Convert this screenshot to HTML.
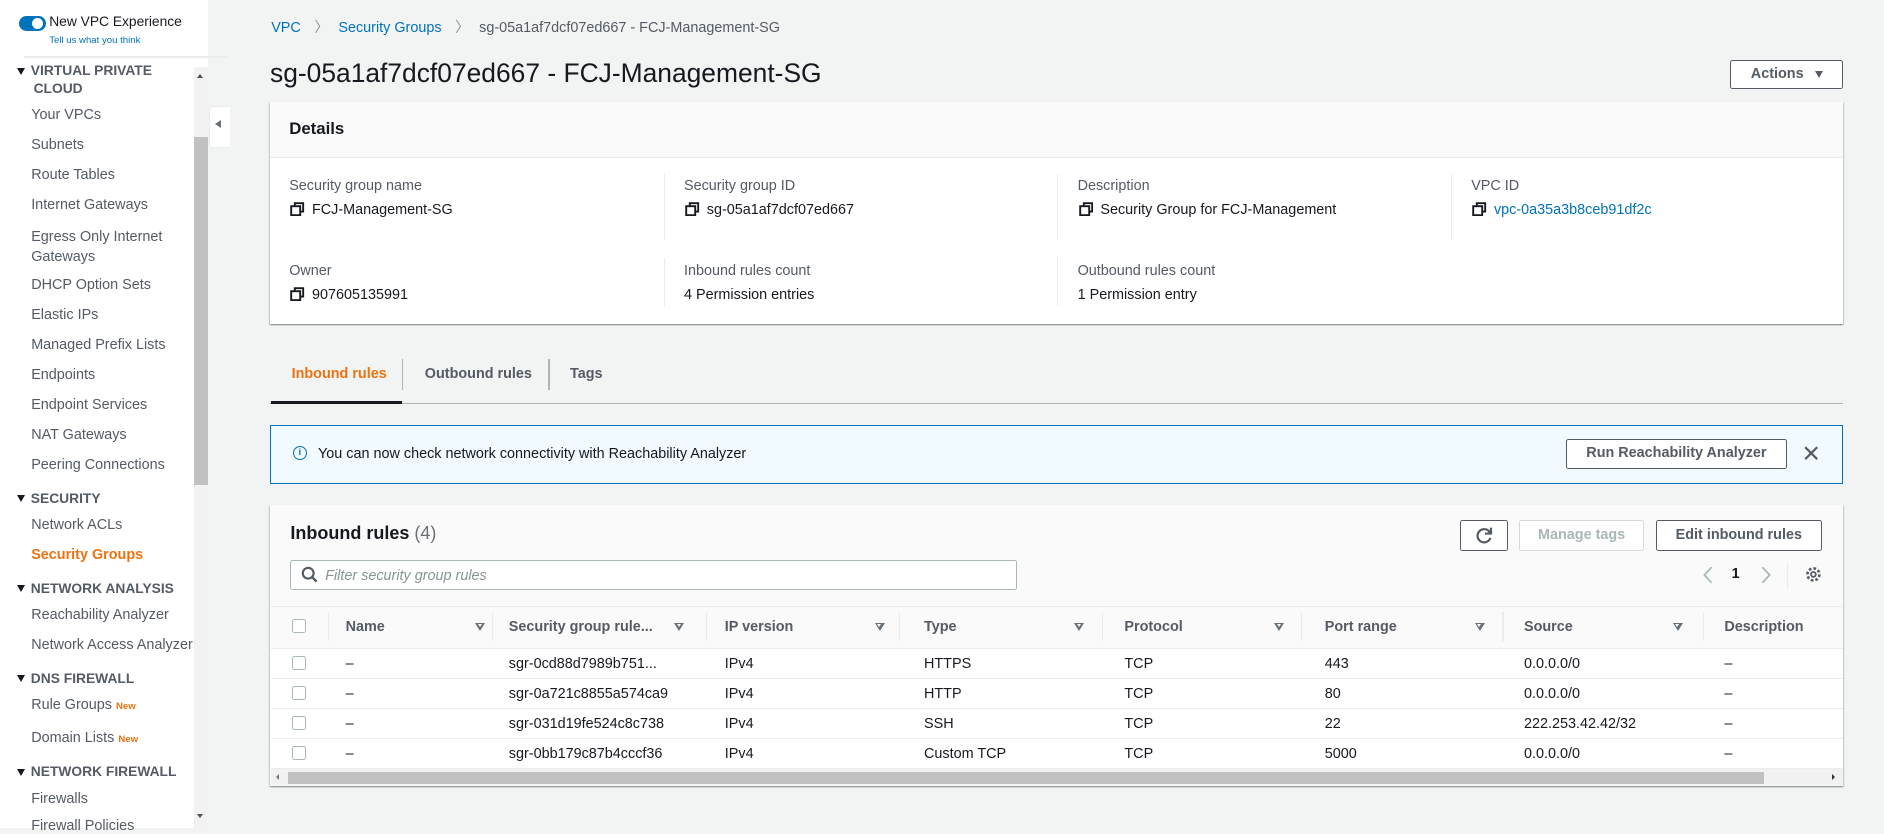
<!DOCTYPE html>
<html><head><meta charset="utf-8"><style>
html{zoom:1.2}
body{margin:0;width:1570px;height:690px;background:#f2f3f3;font-family:"Liberation Sans",sans-serif;color:#16191f;position:relative;overflow:hidden;font-size:12px}
.a{position:absolute;white-space:nowrap}
.sb{position:absolute;left:0;top:0;width:173px;height:690px;background:#fff}
.nav{position:absolute;left:26px;font-size:12px;color:#545b64}
.sec{position:absolute;left:14px;font-size:11.5px;font-weight:bold;color:#545b64}
.sec:before{content:"";display:inline-block;border:4px solid transparent;border-top:6px solid #16191f;margin-right:5px;vertical-align:-3px}
.new{color:#ec7211;font-size:8px;font-weight:bold}
.panel{position:absolute;background:#fff;box-shadow:0 1px 1px rgba(0,28,36,.3),1px 1px 1px rgba(0,28,36,.15),-1px 1px 1px rgba(0,28,36,.15)}
.lbl{color:#545b64;font-size:12px}
.val{font-size:12px}
.cp{display:inline-block;width:12px;height:12px;margin-right:6px;vertical-align:-2px}
.vs{position:absolute;width:1px;background:#eaeded}
.btn{position:absolute;border:1px solid #545b64;border-radius:2px;background:#fff;font-weight:bold;color:#545b64;font-size:12px;text-align:center;box-sizing:border-box}
.th{position:absolute;font-weight:bold;color:#545b64;font-size:12px}
.fi{position:absolute;width:0;height:0;border:4.5px solid transparent;border-top:7px solid #687078}
.fi:after{content:"";position:absolute;left:-2px;top:-6px;border:2px solid transparent;border-top:3px solid #fafafa}
.cb{position:absolute;left:243px;width:10px;height:10px;border:1px solid #aab7b8;border-radius:2px;background:#fff}
.td{position:absolute;font-size:12px}
.row{position:absolute;left:226px;width:1310px;height:1px;background:#eaeded}
</style></head><body>
<svg width="0" height="0" style="position:absolute"><symbol id="cp" viewBox="0 0 12 12"><path d="M4 3V1h7v7H9" fill="none" stroke="#16191f" stroke-width="1.6"/><rect x="1" y="3.5" width="7.5" height="7.5" fill="none" stroke="#16191f" stroke-width="1.6"/></symbol></svg>
<div class="sb"></div>
<div class="a" style="left:16px;top:13px;width:22px;height:13px;border-radius:7px;background:#0073bb"></div>
<div class="a" style="left:27px;top:15px;width:9px;height:9px;border-radius:5px;background:#fff"></div>
<div class="a" style="left:41px;top:12px;font-size:11.5px;color:#16191f">New VPC Experience</div>
<div class="a" style="left:41px;top:29px;font-size:8px;color:#0073bb">Tell us what you think</div>
<div class="a" style="left:20px;top:47px;width:171px;height:1px;background:#eaeded"></div>
<div class="sec" style="top:52px;line-height:15px">VIRTUAL PRIVATE<br><span style="margin-left:14px">CLOUD</span></div>
<div class="nav" style="top:89px">Your VPCs</div>
<div class="nav" style="top:114px">Subnets</div>
<div class="nav" style="top:139px">Route Tables</div>
<div class="nav" style="top:164px">Internet Gateways</div>
<div class="nav" style="top:189px;line-height:17px">Egress Only Internet<br>Gateways</div>
<div class="nav" style="top:231px">DHCP Option Sets</div>
<div class="nav" style="top:256px">Elastic IPs</div>
<div class="nav" style="top:281px">Managed Prefix Lists</div>
<div class="nav" style="top:306px">Endpoints</div>
<div class="nav" style="top:331px">Endpoint Services</div>
<div class="nav" style="top:356px">NAT Gateways</div>
<div class="nav" style="top:381px">Peering Connections</div>
<div class="sec" style="top:409px">SECURITY</div>
<div class="nav" style="top:431px">Network ACLs</div>
<div class="nav" style="top:456px;color:#ec7211;font-weight:bold">Security Groups</div>
<div class="sec" style="top:484px">NETWORK ANALYSIS</div>
<div class="nav" style="top:506px">Reachability Analyzer</div>
<div class="nav" style="top:531px">Network Access Analyzer</div>
<div class="sec" style="top:559px">DNS FIREWALL</div>
<div class="nav" style="top:581px">Rule Groups <span class="new">New</span></div>
<div class="nav" style="top:608px">Domain Lists <span class="new">New</span></div>
<div class="sec" style="top:637px">NETWORK FIREWALL</div>
<div class="nav" style="top:659px">Firewalls</div>
<div class="nav" style="top:682px">Firewall Policies</div>
<div class="a" style="left:162px;top:56px;width:11px;height:634px;background:#f2f2f2"></div>
<div class="a" style="left:162px;top:114px;width:11px;height:290px;background:#c1c1c1"></div>
<div class="a" style="left:164px;top:62px;border:3px solid transparent;border-bottom:4px solid #505050;border-top:0"></div>
<div class="a" style="left:164px;top:678px;border:3px solid transparent;border-top:4px solid #505050;border-bottom:0"></div>
<div class="a" style="left:174px;top:88px;width:17px;height:34px;background:#fff;border:1px solid #eaeded;border-right:0;border-radius:4px 0 0 4px"></div>
<div class="a" style="left:179px;top:100px;border:4px solid transparent;border-right:5px solid #687078;border-left:0"></div>

<div class="a" style="left:226px;top:13px;font-size:12px;color:#0073bb">VPC <span style="color:#879596;margin:0 8px">〉</span>Security Groups <span style="color:#879596;margin:0 8px">〉</span><span style="color:#545b64">sg-05a1af7dcf07ed667 - FCJ-Management-SG</span></div>
<div class="a" style="left:225px;top:48px;font-size:22px;color:#16191f">sg-05a1af7dcf07ed667 - FCJ-Management-SG</div>
<div class="btn" style="left:1442px;top:50px;width:94px;height:24px;line-height:22px;color:#545b64">Actions <span style="display:inline-block;border:4px solid transparent;border-top:6px solid #545b64;vertical-align:-3px;margin-left:6px"></span></div>

<div class="panel" style="left:225px;top:85px;width:1311px;height:185px"></div>
<div class="a" style="left:225px;top:85px;width:1311px;height:46px;background:#fafafa;border-bottom:1px solid #eaeded"></div>
<div class="a" style="left:241px;top:99px;font-size:14px;font-weight:bold">Details</div>
<div class="vs" style="left:553px;top:145px;height:55px"></div><div class="vs" style="left:881px;top:145px;height:55px"></div><div class="vs" style="left:1209px;top:145px;height:55px"></div>
<div class="vs" style="left:553px;top:215px;height:40px"></div><div class="vs" style="left:881px;top:215px;height:40px"></div>
<div class="a lbl" style="left:241px;top:148px">Security group name</div>
<div class="a val" style="left:242px;top:168px"><svg class="cp"><use href="#cp"/></svg>FCJ-Management-SG</div>
<div class="a lbl" style="left:570px;top:148px">Security group ID</div>
<div class="a val" style="left:571px;top:168px"><svg class="cp"><use href="#cp"/></svg>sg-05a1af7dcf07ed667</div>
<div class="a lbl" style="left:898px;top:148px">Description</div>
<div class="a val" style="left:899px;top:168px"><svg class="cp"><use href="#cp"/></svg>Security Group for FCJ-Management</div>
<div class="a lbl" style="left:1226px;top:148px">VPC ID</div>
<div class="a val" style="left:1227px;top:168px;color:#0073bb"><svg class="cp"><use href="#cp"/></svg>vpc-0a35a3b8ceb91df2c</div>
<div class="a lbl" style="left:241px;top:219px">Owner</div>
<div class="a val" style="left:242px;top:239px"><svg class="cp"><use href="#cp"/></svg>907605135991</div>
<div class="a lbl" style="left:570px;top:219px">Inbound rules count</div>
<div class="a val" style="left:570px;top:239px">4 Permission entries</div>
<div class="a lbl" style="left:898px;top:219px">Outbound rules count</div>
<div class="a val" style="left:898px;top:239px">1 Permission entry</div>

<div class="a" style="left:243px;top:305px;font-weight:bold;color:#ec7211">Inbound rules</div>
<div class="a" style="left:335px;top:299px;width:1px;height:26px;background:#aab7b8"></div>
<div class="a" style="left:354px;top:305px;font-weight:bold;color:#545b64">Outbound rules</div>
<div class="a" style="left:457px;top:299px;width:1px;height:26px;background:#aab7b8"></div>
<div class="a" style="left:475px;top:305px;font-weight:bold;color:#545b64">Tags</div>
<div class="a" style="left:225px;top:336px;width:1311px;height:1px;background:#aab7b8"></div>
<div class="a" style="left:226px;top:334px;width:109px;height:3px;background:#16191f"></div>

<div class="a" style="left:225px;top:354px;width:1309px;height:48px;background:#f1faff;border:1px solid #0073bb"></div>
<div class="a" style="left:244px;top:372px;width:10px;height:10px;border:1.5px solid #0073bb;border-radius:50%;color:#0073bb;font-size:8px;font-weight:bold;text-align:center;line-height:10px">i</div>
<div class="a" style="left:265px;top:372px;font-size:12px">You can now check network connectivity with Reachability Analyzer</div>
<div class="btn" style="left:1305px;top:366px;width:184px;height:25px;line-height:23px">Run Reachability Analyzer</div>
<svg class="a" style="left:1503px;top:372px" width="12" height="12"><path d="M1 1 11 11M11 1 1 11" stroke="#545b64" stroke-width="1.8"/></svg>

<div class="panel" style="left:225px;top:421px;width:1311px;height:234px;background:#fafafa"></div>
<div class="a" style="left:242px;top:436px;font-size:15px;font-weight:bold">Inbound rules <span style="font-weight:normal;color:#687078">(4)</span></div>
<div class="btn" style="left:1217px;top:433px;width:40px;height:26px"></div>
<svg class="a" style="left:1230px;top:439px" width="14" height="14"><path d="M11.5 4.5A5.5 5.5 0 1 0 12 9" fill="none" stroke="#545b64" stroke-width="1.8"/><path d="M12.5 0.5v5h-5" fill="none" stroke="#545b64" stroke-width="1.8"/></svg>
<div class="btn" style="left:1266px;top:433px;width:104px;height:26px;line-height:24px;border-color:#d5dbdb;color:#aab7b8">Manage tags</div>
<div class="btn" style="left:1380px;top:433px;width:138px;height:26px;line-height:24px">Edit inbound rules</div>
<div class="a" style="left:242px;top:467px;width:604px;height:23px;background:#fff;border:1px solid #aab7b8;border-radius:2px"></div>
<svg class="a" style="left:251px;top:472px" width="14" height="14"><circle cx="6" cy="6" r="4.5" fill="none" stroke="#545b64" stroke-width="1.8"/><path d="M9.5 9.5 13 13" stroke="#545b64" stroke-width="2"/></svg>
<div class="a" style="left:271px;top:473px;font-style:italic;color:#879596">Filter security group rules</div>
<svg class="a" style="left:1418px;top:472px" width="10" height="15"><path d="M8 1 2 7.5 8 14" fill="none" stroke="#aab7b8" stroke-width="1.5"/></svg>
<div class="a" style="left:1443px;top:472px;font-weight:bold">1</div>
<svg class="a" style="left:1467px;top:472px" width="10" height="15"><path d="M2 1 8 7.5 2 14" fill="none" stroke="#aab7b8" stroke-width="1.5"/></svg>
<div class="a" style="left:1489px;top:469px;width:1px;height:22px;background:#eaeded"></div>
<svg class="a" style="left:1504px;top:472px" width="14" height="14"><circle cx="7" cy="7" r="2" fill="none" stroke="#545b64" stroke-width="1.5"/><circle cx="7" cy="7" r="5" fill="none" stroke="#545b64" stroke-width="2.2" stroke-dasharray="2.2 1.7"/></svg>
<div class="a" style="left:226px;top:505px;width:1310px;height:1px;background:#eaeded"></div>
<div class="cb" style="top:516px"></div>
<div class="th" style="left:288px;top:516px">Name</div><div class="fi" style="left:396px;top:519px"></div>
<div class="a" style="left:273px;top:510px;width:1px;height:24px;background:#eaeded"></div>
<div class="a" style="left:410px;top:510px;width:1px;height:24px;background:#eaeded"></div>
<div class="th" style="left:424px;top:516px">Security group rule...</div><div class="fi" style="left:562px;top:519px"></div>
<div class="a" style="left:588px;top:510px;width:1px;height:24px;background:#eaeded"></div>
<div class="th" style="left:604px;top:516px">IP version</div><div class="fi" style="left:729px;top:519px"></div>
<div class="a" style="left:749px;top:510px;width:1px;height:24px;background:#eaeded"></div>
<div class="th" style="left:770px;top:516px">Type</div><div class="fi" style="left:895px;top:519px"></div>
<div class="a" style="left:918px;top:510px;width:1px;height:24px;background:#eaeded"></div>
<div class="th" style="left:937px;top:516px">Protocol</div><div class="fi" style="left:1062px;top:519px"></div>
<div class="a" style="left:1084px;top:510px;width:1px;height:24px;background:#eaeded"></div>
<div class="th" style="left:1104px;top:516px">Port range</div><div class="fi" style="left:1229px;top:519px"></div>
<div class="a" style="left:1252px;top:510px;width:1px;height:24px;background:#eaeded"></div>
<div class="th" style="left:1270px;top:516px">Source</div><div class="fi" style="left:1394px;top:519px"></div>
<div class="a" style="left:1419px;top:510px;width:1px;height:24px;background:#eaeded"></div>
<div class="th" style="left:1437px;top:516px">Description</div>
<div class="a" style="left:226px;top:541px;width:1310px;height:100px;background:#fff"></div>
<div class="row" style="top:540px"></div><div class="row" style="top:565px"></div><div class="row" style="top:590px"></div><div class="row" style="top:615px"></div><div class="row" style="top:640px"></div>

<div class="cb" style="top:547px"></div><div class="td" style="left:288px;top:547px">–</div><div class="td" style="left:424px;top:547px">sgr-0cd88d7989b751...</div><div class="td" style="left:604px;top:547px">IPv4</div><div class="td" style="left:770px;top:547px">HTTPS</div><div class="td" style="left:937px;top:547px">TCP</div><div class="td" style="left:1104px;top:547px">443</div><div class="td" style="left:1270px;top:547px">0.0.0.0/0</div><div class="td" style="left:1437px;top:547px">–</div>
<div class="cb" style="top:572px"></div><div class="td" style="left:288px;top:572px">–</div><div class="td" style="left:424px;top:572px">sgr-0a721c8855a574ca9</div><div class="td" style="left:604px;top:572px">IPv4</div><div class="td" style="left:770px;top:572px">HTTP</div><div class="td" style="left:937px;top:572px">TCP</div><div class="td" style="left:1104px;top:572px">80</div><div class="td" style="left:1270px;top:572px">0.0.0.0/0</div><div class="td" style="left:1437px;top:572px">–</div>
<div class="cb" style="top:597px"></div><div class="td" style="left:288px;top:597px">–</div><div class="td" style="left:424px;top:597px">sgr-031d19fe524c8c738</div><div class="td" style="left:604px;top:597px">IPv4</div><div class="td" style="left:770px;top:597px">SSH</div><div class="td" style="left:937px;top:597px">TCP</div><div class="td" style="left:1104px;top:597px">22</div><div class="td" style="left:1270px;top:597px">222.253.42.42/32</div><div class="td" style="left:1437px;top:597px">–</div>
<div class="cb" style="top:622px"></div><div class="td" style="left:288px;top:622px">–</div><div class="td" style="left:424px;top:622px">sgr-0bb179c87b4cccf36</div><div class="td" style="left:604px;top:622px">IPv4</div><div class="td" style="left:770px;top:622px">Custom TCP</div><div class="td" style="left:937px;top:622px">TCP</div><div class="td" style="left:1104px;top:622px">5000</div><div class="td" style="left:1270px;top:622px">0.0.0.0/0</div><div class="td" style="left:1437px;top:622px">–</div>

<div class="a" style="left:226px;top:641px;width:1310px;height:13px;background:#f1f1f1"></div>
<div class="a" style="left:240px;top:643px;width:1230px;height:10px;background:#c1c1c1"></div>
<div class="a" style="left:230px;top:645px;border:3px solid transparent;border-right:3px solid #777;border-left:0"></div>
<div class="a" style="left:1527px;top:645px;border:3px solid transparent;border-left:3px solid #333;border-right:0"></div>
</body></html>
